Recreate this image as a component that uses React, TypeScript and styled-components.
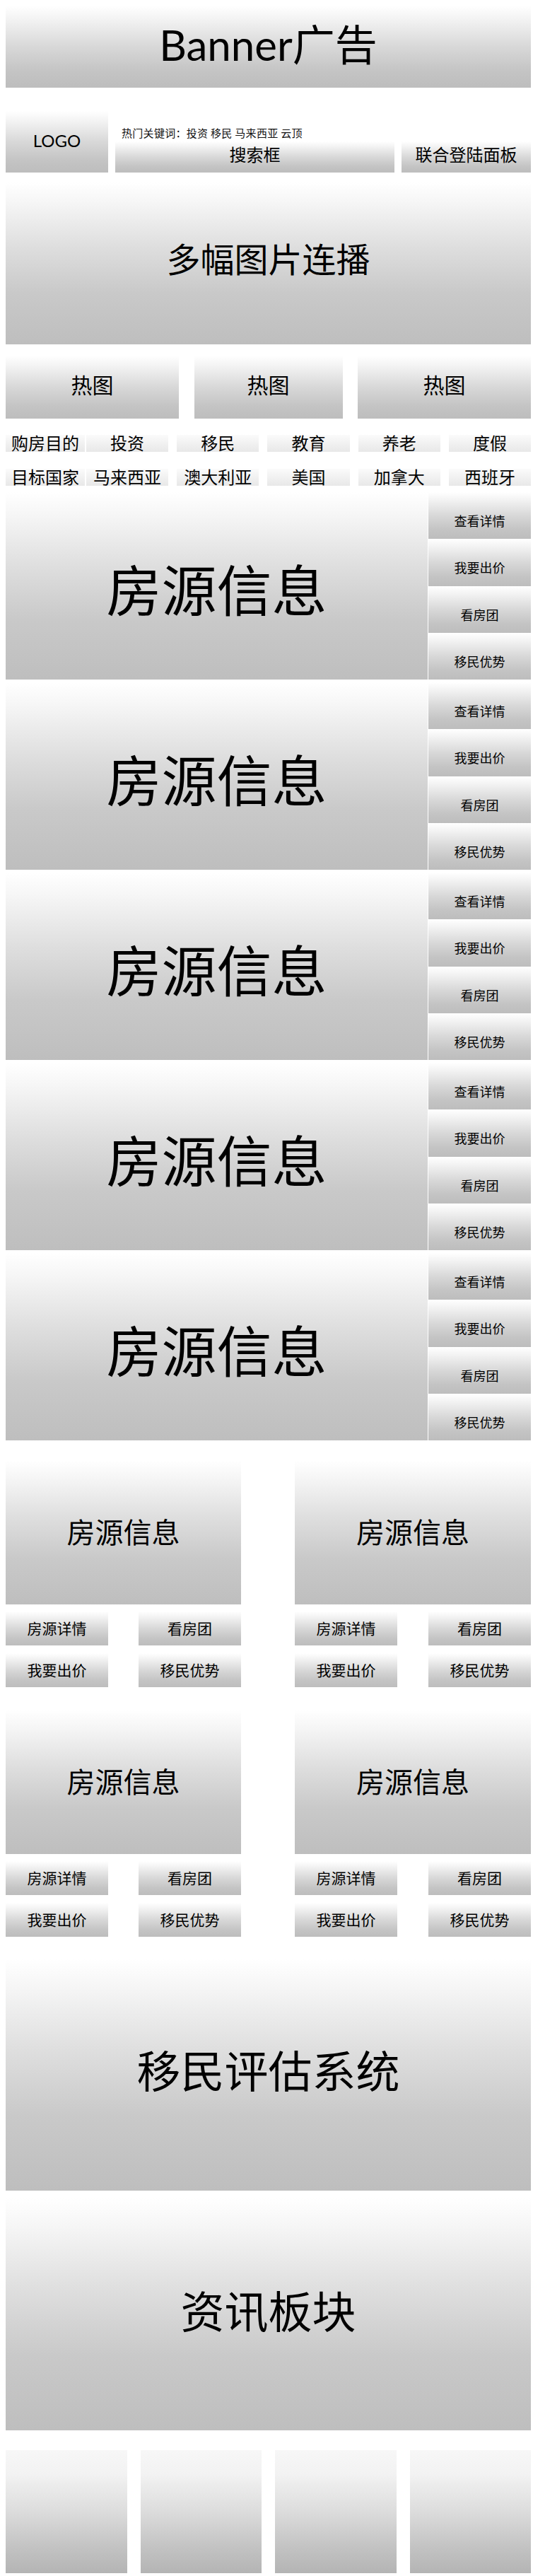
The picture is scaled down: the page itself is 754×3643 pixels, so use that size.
import { createGlobalStyle, styled } from 'styled-components';

const GlobalStyle = createGlobalStyle`
  html, body {
    margin: 0;
    padding: 0;
    background: #ffffff;
  }
  body {
    font-family: "Noto Sans CJK SC", "Noto Sans", sans-serif;
    color: #000000;
  }
`;

type Tone = 'deep' | 'soft' | 'pale' | 'tile';

const gradients: Record<Tone, string> = {
  deep: 'linear-gradient(180deg, #ffffff 0%, #f6f6f6 12%, #dedede 40%, #c9c9c9 68%, #bebebe 100%)',
  soft: 'linear-gradient(180deg, #ffffff 0%, #f4f4f4 15%, #d8d8d8 50%, #c4c4c4 80%, #bdbdbd 100%)',
  pale: 'linear-gradient(180deg, #fbfbfb 0%, #f1f1f1 50%, #e8e8e8 100%)',
  tile: 'linear-gradient(180deg, #f7f7f7 0%, #f2f2f2 20%, #dcdcdc 50%, #c2c2c2 80%, #b4b4b4 100%)',
};

// every grey block on the wireframe is one of these; $shift nudges the label off centre
const Block = styled.div<{ $h: number; $size: number; $tone?: Tone; $shift?: number }>`
  height: ${(p) => p.$h}px;
  background: ${(p) => gradients[p.$tone ?? 'deep']};
  display: flex;
  align-items: center;
  justify-content: center;
  box-sizing: border-box;
  padding-top: ${(p) => Math.max(0, (p.$shift ?? 0) * 2)}px;
  padding-bottom: ${(p) => Math.max(0, -(p.$shift ?? 0) * 2)}px;
  font-size: ${(p) => p.$size}px;
  line-height: 1;
  white-space: nowrap;
`;

const LatinBlock = styled(Block)`
  font-family: "Lato", "Noto Sans CJK SC", sans-serif;
`;

const Page = styled.div`
  width: 743px;
  padding: 8px 3px 4px 8px;
`;

const Header = styled.div`
  margin-top: 33px;
  display: grid;
  grid-template-columns: 145px 395px 183px;
  column-gap: 10px;
  align-items: end;
`;

const SearchColumn = styled.div`
  display: flex;
  flex-direction: column;
`;

const Keywords = styled.div`
  padding-left: 9px;
  margin-bottom: 4px;
  font-size: 15px;
  line-height: 16px;
  color: #111111;
  letter-spacing: 0.3px;
`;

const Carousel = styled(Block)`
  margin-top: 14px;
`;

const HotRow = styled.div`
  margin-top: 16px;
  display: grid;
  grid-template-columns: 245px 210px 245px;
  justify-content: space-between;
`;

const TagGroup = styled.div`
  margin-top: 23px;
  display: flex;
  flex-direction: column;
  gap: 24px;
`;

const TagRow = styled.div`
  display: flex;
  gap: 2px;
`;

const TagLabel = styled(Block)`
  width: 112px;
  flex: none;
`;

const TagList = styled.div`
  flex: 1;
  display: flex;
  gap: 12px;
`;

const Tag = styled(Block)`
  flex: 1;
`;

const ListingStack = styled.div`
  margin-top: 9px;
  display: flex;
  flex-direction: column;
  gap: 4px;
`;

const Listing = styled.div`
  display: grid;
  grid-template-columns: 597px 145px;
  column-gap: 1px;
  height: 265px;
`;

const ListingActions = styled.div`
  display: flex;
  flex-direction: column;
`;

const ActionButton = styled(Block)`
  flex: 1;
`;

const CardGrid = styled.div`
  margin-top: 28px;
  display: grid;
  grid-template-columns: 333px 334px;
  justify-content: space-between;
  row-gap: 32px;
`;

const Card = styled.div`
  display: flex;
  flex-direction: column;
`;

const CardActions = styled.div`
  margin-top: 10px;
  display: grid;
  grid-template-columns: 145px 145px;
  justify-content: space-between;
  row-gap: 11px;
`;

const Section = styled(Block)<{ $gap: number }>`
  margin-top: ${(p) => p.$gap}px;
`;

const TileRow = styled.div`
  margin-top: 28px;
  display: grid;
  grid-template-columns: repeat(4, 1fr);
  column-gap: 19px;
`;

const purposes = ['投资', '移民', '教育', '养老', '度假'];
const countries = ['马来西亚', '澳大利亚', '美国', '加拿大', '西班牙'];
const listingActions = ['查看详情', '我要出价', '看房团', '移民优势'];
const cardActions = ['房源详情', '看房团', '我要出价', '移民优势'];

export default function App() {
  return (
    <>
      <GlobalStyle />
      <Page>
        <LatinBlock $h={116} $size={60} $tone="soft" $shift={-3}>
          Banner广告
        </LatinBlock>

        <Header>
          <LatinBlock $h={87} $size={24} $tone="soft" $shift={-2}>
            LOGO
          </LatinBlock>
          <SearchColumn>
            <Keywords>热门关键词：投资 移民 马来西亚 云顶</Keywords>
            <Block $h={44} $size={24} $tone="soft" $shift={-4}>
              搜索框
            </Block>
          </SearchColumn>
          <Block $h={44} $size={24} $tone="soft" $shift={-4}>
            联合登陆面板
          </Block>
        </Header>

        <Carousel $h={229} $size={48} $shift={-9}>
          多幅图片连播
        </Carousel>

        <HotRow>
          {[0, 1, 2].map((i) => (
            <Block key={i} $h={89} $size={30} $tone="soft" $shift={-5}>
              热图
            </Block>
          ))}
        </HotRow>

        <TagGroup>
          <TagRow>
            <TagLabel $h={24} $size={24} $tone="pale" $shift={-1}>
              购房目的
            </TagLabel>
            <TagList>
              {purposes.map((t) => (
                <Tag key={t} $h={24} $size={24} $tone="pale" $shift={-1}>
                  {t}
                </Tag>
              ))}
            </TagList>
          </TagRow>
          <TagRow>
            <TagLabel $h={24} $size={24} $tone="pale" $shift={-1}>
              目标国家
            </TagLabel>
            <TagList>
              {countries.map((t) => (
                <Tag key={t} $h={24} $size={24} $tone="pale" $shift={-1}>
                  {t}
                </Tag>
              ))}
            </TagList>
          </TagRow>
        </TagGroup>

        <ListingStack>
          {[0, 1, 2, 3, 4].map((i) => (
            <Listing key={i}>
              <Block $h={265} $size={78} $shift={2}>
                房源信息
              </Block>
              <ListingActions>
                {listingActions.map((a) => (
                  <ActionButton key={a} $h={66} $size={18} $tone="soft" $shift={7}>
                    {a}
                  </ActionButton>
                ))}
              </ListingActions>
            </Listing>
          ))}
        </ListingStack>

        <CardGrid>
          {[0, 1, 2, 3].map((i) => (
            <Card key={i}>
              <Block $h={204} $size={40} $shift={-2}>
                房源信息
              </Block>
              <CardActions>
                {cardActions.map((a) => (
                  <Block key={a} $h={48} $size={21} $tone="soft" $shift={-1}>
                    {a}
                  </Block>
                ))}
              </CardActions>
            </Card>
          ))}
        </CardGrid>

        <Section $gap={31} $h={328} $size={62} $shift={-8}>
          移民评估系统
        </Section>
        <Section $gap={10} $h={329} $size={62} $shift={-7}>
          资讯板块
        </Section>

        <TileRow>
          {[0, 1, 2, 3].map((i) => (
            <Block key={i} $h={174} $size={0} $tone="tile" />
          ))}
        </TileRow>
      </Page>
    </>
  );
}
